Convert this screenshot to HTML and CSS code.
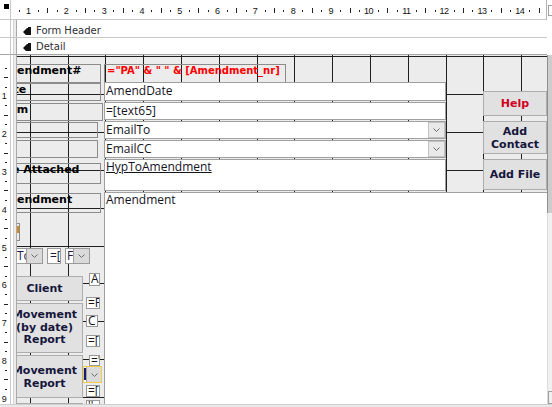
FILE: index.html
```html
<!DOCTYPE html>
<html>
<head>
<meta charset="utf-8">
<title>Form Design</title>
<link rel="stylesheet" href="styles.css">
</head>
<body>
<div class="win">
  <div class="toprow">
    <div class="corner"><span class="sq"></span></div>
    <div class="hr">
      <svg class="hruler" width="535" height="19" viewBox="0 0 535 19">
        <g fill="#222">
          <rect x="8" y="10" width="1" height="2"/><rect x="27" y="10" width="1" height="2"/><rect x="46" y="10" width="1" height="2"/><rect x="65" y="10" width="1" height="2"/><rect x="83" y="10" width="1" height="2"/><rect x="102" y="10" width="1" height="2"/><rect x="121" y="10" width="1" height="2"/><rect x="140" y="10" width="1" height="2"/><rect x="159" y="10" width="1" height="2"/><rect x="178" y="10" width="1" height="2"/><rect x="197" y="10" width="1" height="2"/><rect x="216" y="10" width="1" height="2"/><rect x="235" y="10" width="1" height="2"/><rect x="254" y="10" width="1" height="2"/><rect x="272" y="10" width="1" height="2"/><rect x="291" y="10" width="1" height="2"/><rect x="310" y="10" width="1" height="2"/><rect x="329" y="10" width="1" height="2"/><rect x="348" y="10" width="1" height="2"/><rect x="367" y="10" width="1" height="2"/><rect x="386" y="10" width="1" height="2"/><rect x="405" y="10" width="1" height="2"/><rect x="424" y="10" width="1" height="2"/><rect x="443" y="10" width="1" height="2"/><rect x="461" y="10" width="1" height="2"/><rect x="480" y="10" width="1" height="2"/><rect x="499" y="10" width="1" height="2"/><rect x="518" y="10" width="1" height="2"/>
          <rect x="36" y="8" width="1" height="5"/><rect x="74" y="8" width="1" height="5"/><rect x="112" y="8" width="1" height="5"/><rect x="150" y="8" width="1" height="5"/><rect x="187" y="8" width="1" height="5"/><rect x="225" y="8" width="1" height="5"/><rect x="263" y="8" width="1" height="5"/><rect x="301" y="8" width="1" height="5"/><rect x="339" y="8" width="1" height="5"/><rect x="376" y="8" width="1" height="5"/><rect x="414" y="8" width="1" height="5"/><rect x="452" y="8" width="1" height="5"/><rect x="490" y="8" width="1" height="5"/><rect x="528" y="8" width="1" height="5"/>
        </g>
        <g class="rnum" text-anchor="middle">
          <text x="17.3" y="14">1</text><text x="55.1" y="14">2</text><text x="92.9" y="14">3</text><text x="130.7" y="14">4</text><text x="168.5" y="14">5</text><text x="206.3" y="14">6</text><text x="244.1" y="14">7</text><text x="281.9" y="14">8</text><text x="319.7" y="14">9</text><text x="357.5" y="14">10</text><text x="395.3" y="14">11</text><text x="433.1" y="14">12</text><text x="470.9" y="14">13</text><text x="508.7" y="14">14</text>
        </g>
      </svg>
    </div>
    <div class="trr"><span class="trbtn"></span></div>
  </div>

  <div class="secrow fh">
    <div class="rcell"></div>
    <div class="gut"></div>
    <div class="bar"><svg class="secicon" width="8" height="8" viewBox="0 0 8 8"><polygon points="0,5 4,1 5,1 5,0 8,0 8,8 3,8" fill="#111"/></svg><span>Form Header</span></div>
    <div class="rblank"></div>
  </div>

  <div class="secrow dt">
    <div class="rcell"></div>
    <div class="gut"></div>
    <div class="bar"><svg class="secicon" width="8" height="8" viewBox="0 0 8 8"><polygon points="0,5 4,1 5,1 5,0 8,0 8,8 3,8" fill="#111"/></svg><span>Detail</span></div>
    <div class="rblank"></div>
  </div>

  <div class="mainrow">
    <div class="vr">
      <svg class="vruler" width="10" height="349" viewBox="0 0 10 349">
        <g fill="#222">
          <rect x="5" y="13" width="2" height="1"/><rect x="5" y="32" width="2" height="1"/><rect x="5" y="50" width="2" height="1"/><rect x="5" y="69" width="2" height="1"/><rect x="5" y="88" width="2" height="1"/><rect x="5" y="107" width="2" height="1"/><rect x="5" y="126" width="2" height="1"/><rect x="5" y="145" width="2" height="1"/><rect x="5" y="164" width="2" height="1"/><rect x="5" y="183" width="2" height="1"/><rect x="5" y="202" width="2" height="1"/><rect x="5" y="221" width="2" height="1"/><rect x="5" y="239" width="2" height="1"/><rect x="5" y="258" width="2" height="1"/><rect x="5" y="277" width="2" height="1"/><rect x="5" y="296" width="2" height="1"/><rect x="5" y="315" width="2" height="1"/><rect x="5" y="334" width="2" height="1"/>
          <rect x="4" y="22" width="4" height="1"/><rect x="4" y="60" width="4" height="1"/><rect x="4" y="98" width="4" height="1"/><rect x="4" y="135" width="4" height="1"/><rect x="4" y="173" width="4" height="1"/><rect x="4" y="211" width="4" height="1"/><rect x="4" y="249" width="4" height="1"/><rect x="4" y="287" width="4" height="1"/><rect x="4" y="324" width="4" height="1"/>
        </g>
        <g class="rnum" text-anchor="middle">
          <text x="4" y="44.3">1</text><text x="4" y="82.1">2</text><text x="4" y="119.9">3</text><text x="4" y="157.7">4</text><text x="4" y="195.5">5</text><text x="4" y="233.3">6</text><text x="4" y="271.1">7</text><text x="4" y="308.9">8</text><text x="4" y="346.7">9</text>
        </g>
      </svg>
    </div>
    <div class="gut"></div>
    <div class="canvas">
      <svg class="grid" width="530" height="349" viewBox="0 0 530 349">
        <g fill="#1f1f1f">
          <rect x="13" y="0" width="1" height="349"/><rect x="51" y="0" width="1" height="349"/><rect x="88" y="0" width="1" height="349"/><rect x="126" y="0" width="1" height="349"/><rect x="164" y="0" width="1" height="349"/><rect x="202" y="0" width="1" height="349"/><rect x="240" y="0" width="1" height="349"/><rect x="277" y="0" width="1" height="349"/><rect x="315" y="0" width="1" height="349"/><rect x="353" y="0" width="1" height="349"/><rect x="391" y="0" width="1" height="349"/><rect x="429" y="0" width="1" height="349"/><rect x="466" y="0" width="1" height="349"/><rect x="504" y="0" width="1" height="349"/>
          <rect x="0" y="1" width="530" height="1"/><rect x="0" y="39" width="530" height="1"/><rect x="0" y="77" width="530" height="1"/><rect x="0" y="115" width="530" height="1"/><rect x="0" y="153" width="530" height="1"/><rect x="0" y="191" width="530" height="1"/><rect x="0" y="228" width="530" height="1"/><rect x="0" y="266" width="530" height="1"/><rect x="0" y="304" width="530" height="1"/><rect x="0" y="342" width="530" height="1"/>
        </g>
      </svg>

      <div class="lbl l-num">Amendment#</div>
      <div class="lbl l-date">Date</div>
      <div class="lbl l-from">From</div>
      <div class="lbl l-to">To</div>
      <div class="lbl l-cc">CC</div>
      <div class="lbl l-file">File Attached</div>
      <div class="lbl l-amd">Amendment</div>

      <div class="expr">="PA" &amp; " " &amp; [Amendment_nr]</div>

      <div class="tb t-date">AmendDate</div>
      <div class="tb t-t65">=[text65]</div>
      <div class="tb t-to">EmailTo<span class="dd"><svg width="7" height="4" viewBox="0 0 7 4"><polyline points="0.5,0.5 3.5,3.5 6.5,0.5" fill="none" stroke="#6a6a6a" stroke-width="1"/></svg></span></div>
      <div class="tb t-cc">EmailCC<span class="dd"><svg width="7" height="4" viewBox="0 0 7 4"><polyline points="0.5,0.5 3.5,3.5 6.5,0.5" fill="none" stroke="#6a6a6a" stroke-width="1"/></svg></span></div>
      <div class="tb t-hyp"><span class="link">HypToAmendment</span></div>
      <div class="tb t-amd">Amendment</div>

      <div class="btn b-help">Help</div>
      <div class="btn b-contact">Add<br>Contact</div>
      <div class="btn b-file">Add File</div>

      <div class="obox"><span class="omark"></span></div>

      <div class="cmb c-a"><span class="ctext">To</span><span class="cdd"><svg width="7" height="4" viewBox="0 0 7 4"><polyline points="0.5,0.5 3.5,3.5 6.5,0.5" fill="none" stroke="#6a6a6a" stroke-width="1"/></svg></span></div>
      <div class="cmb c-b"><span class="ctext">=[</span></div>
      <div class="cmb c-c"><span class="ctext">F</span><span class="cdd"><svg width="7" height="4" viewBox="0 0 7 4"><polyline points="0.5,0.5 3.5,3.5 6.5,0.5" fill="none" stroke="#6a6a6a" stroke-width="1"/></svg></span></div>

      <div class="btn b-client">Client</div>
      <div class="btn b-mvd">Movement<br>(by date)<br>Report</div>
      <div class="btn b-mv">Movement<br>Report</div>
      <div class="btn b-next"></div>

      <div class="sm s-a">A</div>
      <div class="sm s-f">=F</div>
      <div class="sm s-c">C</div>
      <div class="sm s-l1">=[l</div>
      <div class="sm s-q">='</div>
      <div class="ydd"><span class="ynav"></span><span class="cdd"><svg width="7" height="4" viewBox="0 0 7 4"><polyline points="0.5,0.5 3.5,3.5 6.5,0.5" fill="none" stroke="#6a6a6a" stroke-width="1"/></svg></span></div>
      <div class="sm s-l2">=[l</div>
      <div class="sm s-r">''</div>
    </div>
    <div class="vscroll">
      <div class="thumb"></div>
      <div class="track"><div class="dn"></div></div>
    </div>
  </div>
  <div class="hscroll"></div>
</div>
</body>
</html>
```

FILE: styles.css
```css
html, body {
  margin: 0;
  padding: 0;
  background: #fff;
}
body {
  width: 552px;
  height: 407px;
  overflow: hidden;
}
.win {
  width: 552px;
  height: 407px;
  overflow: hidden;
  display: flex;
  flex-direction: column;
}
svg { display: block; }
.rnum {
  font-family: "Liberation Sans", Arial, sans-serif;
  font-size: 9px;
  letter-spacing: -0.5px;
  fill: #111;
}

/* top ruler row */
.toprow {
  display: flex;
  flex: none;
  height: 20px;
  align-items: flex-start;
}
.corner {
  width: 10px;
  height: 19px;
  border-right: 1px solid #c8c8c8;
  border-bottom: 1px solid #c8c8c8;
}
.sq {
  display: block;
  width: 5px;
  height: 5px;
  margin: 4px 0 0 4px;
  background: #000;
}
.hr {
  width: 535px;
  height: 19px;
  border-right: 1px solid #b4b4b4;
  border-bottom: 1px solid #c8c8c8;
}
.trr { width: 5px; }
.trbtn {
  display: block;
  margin: 5px 0 0 1px;
  height: 9px;
  border: 1px solid #a0a0a0;
  border-right: 0;
}

/* section bars */
.secrow {
  display: flex;
  flex: none;
}
.rcell {
  width: 10px;
  border-right: 1px solid #c8c8c8;
}
.gut {
  width: 6px;
  background: linear-gradient(to right, #fff 0 2px, #d6d6d6 2px 3px, #ebebeb 3px 5px, #a9a9a9 5px 6px);
}
.bar {
  width: 530px;
  box-sizing: border-box;
  padding-left: 6px;
  display: flex;
  align-items: flex-start;
  font-family: "DejaVu Sans", sans-serif;
  font-size: 10px;
  line-height: 12px;
  color: #2e2e33;
}
.secicon {
  margin: 2px 5px 0 0;
}
.rblank { width: 5px; }
.fh .rcell, .fh .gut { height: 17px; border-bottom: 1px solid #c8c8c8; }
.fh .bar { height: 17px; padding-top: 5px; border-bottom: 1px solid #c8c8c8; }
.dt .rcell, .dt .gut { height: 16px; border-bottom: 1px solid #a4a4a4; }
.dt .bar { height: 16px; padding-top: 3px; border-bottom: 1px solid #a4a4a4; }
.bar { box-sizing: content-box; width: 524px; }
.fh .bar { height: 12px; }
.dt .bar { height: 13px; }

/* main row */
.mainrow {
  display: flex;
  flex: none;
  height: 349px;
}
.vr {
  width: 10px;
  border-right: 1px solid #c8c8c8;
}
.canvas {
  position: relative;
  width: 530px;
  height: 349px;
  background: #ececec;
  overflow: hidden;
}
.grid {
  position: absolute;
  left: 0;
  top: 0;
}
.vscroll {
  width: 5px;
  display: flex;
  flex-direction: column;
}
.thumb {
  height: 158px;
  border-left: 1px solid #8f8f8f;
  background: #cdcdcd;
}
.track {
  flex: 1;
  display: flex;
  flex-direction: column;
  justify-content: flex-end;
  border-left: 1px solid #dcdcdc;
  background: #f0f0f0;
}
.dn {
  height: 11px;
  margin-left: 0;
  border: 1px solid #a0a0a0;
  border-right: 0;
}
.hscroll {
  flex: none;
  height: 3px;
  border-top: 1px solid #cfcfcf;
  background: #e8e8e8;
}

/* labels */
.lbl {
  position: absolute;
  left: -24px;
  box-sizing: border-box;
  border: 1px solid #8c8c8c;
  padding-left: 3px;
  font-family: "DejaVu Sans", sans-serif;
  font-weight: bold;
  font-size: 11px;
  line-height: 12px;
  color: #000;
  white-space: nowrap;
  overflow: hidden;
}
.l-num  { top: 9px;   height: 19px; width: 108px; }
.l-date { top: 28px;  height: 18px; width: 108px; }
.l-from { top: 48px;  height: 18px; width: 110px; }
.l-to   { top: 67px;  height: 16px; width: 105px; }
.l-cc   { top: 85px;  height: 18px; width: 105px; }
.l-file { top: 108px; height: 21px; width: 108px; }
.l-amd  { top: 138px; height: 20px; width: 108px; }

/* expression box */
.expr {
  position: absolute;
  left: 87px;
  top: 9px;
  width: 182px;
  height: 19px;
  box-sizing: border-box;
  border: 1px solid #8c8c8c;
  padding-left: 2px;
  font-family: "DejaVu Sans", sans-serif;
  font-weight: bold;
  font-size: 10px;
  line-height: 12px;
  color: #ff0000;
  white-space: nowrap;
  overflow: hidden;
}

/* text boxes */
.tb {
  position: absolute;
  left: 87px;
  width: 342px;
  box-sizing: border-box;
  background: #fff;
  border: 1px solid #a0a0a0;
  padding-left: 1px;
  font-family: "Open Sans", sans-serif;
  font-size: 12px;
  line-height: 15px;
  color: #14141e;
  white-space: nowrap;
  overflow: hidden;
}
.t-date { top: 27px;  height: 19px; }
.t-t65  { top: 47px;  height: 18px; }
.t-to   { top: 66px;  height: 18px; }
.t-cc   { top: 85px;  height: 18px; }
.t-hyp  { top: 104px; height: 32px; line-height: 14px; }
.t-amd  { top: 137px; height: 260px; width: 460px; line-height: 14px; }
.link { text-decoration: underline; }
.dd {
  position: absolute;
  right: 0;
  top: 0;
  width: 17px;
  height: 16px;
  box-sizing: border-box;
  background: #e9e9e9;
  border: 1px solid #c2c2c2;
  display: flex;
  align-items: center;
  justify-content: center;
}

/* buttons */
.btn {
  position: absolute;
  box-sizing: border-box;
  background: #e1e1e1;
  border: 1px solid #adadad;
  display: flex;
  align-items: center;
  justify-content: center;
  text-align: center;
  font-family: "DejaVu Sans", sans-serif;
  font-weight: bold;
  font-size: 11px;
  line-height: 13px;
  color: #16163c;
  white-space: nowrap;
}
.b-help    { left: 466px; top: 36px;  width: 64px; height: 25px; color: #d0001e; }
.b-contact { left: 466px; top: 66px;  width: 64px; height: 33px; }
.b-file    { left: 466px; top: 104px; width: 64px; height: 31px; }
.b-client  { left: -11px; top: 221px; width: 77px; height: 25px; }
.b-mvd     { left: -11px; top: 248px; width: 77px; height: 50px; line-height: 12.5px; }
.b-mv      { left: -11px; top: 300px; width: 77px; height: 43px; }
.b-next    { left: -11px; top: 348px; width: 77px; height: 40px; }

/* small orange control */
.obox {
  position: absolute;
  left: -20px;
  top: 168px;
  width: 23px;
  height: 18px;
  box-sizing: border-box;
  border: 1px solid #8c8c8c;
}
.omark {
  display: block;
  width: 2px;
  height: 7px;
  margin: 2px 0 0 19px;
  background: #d8891c;
}

/* combos */
.cmb {
  position: absolute;
  top: 193px;
  height: 16px;
  box-sizing: border-box;
  border: 1px solid #9a9a9a;
  background: #fff;
  display: flex;
  overflow: hidden;
  font-family: "Open Sans", sans-serif;
  font-size: 12px;
  line-height: 14px;
  color: #1c1a44;
}
.ctext {
  flex: 1;
  overflow: hidden;
  white-space: nowrap;
  padding-left: 1px;
}
.cdd {
  flex: none;
  width: 16px;
  box-sizing: border-box;
  background: #dadada;
  border-left: 1px solid #a0a0a0;
  display: flex;
  align-items: center;
  justify-content: center;
}
.c-a { left: -30px; width: 56px; }
.c-a .ctext { padding-left: 29px; }
.c-b { left: 30px; width: 14px; }
.c-b .ctext { padding-left: 2px; }
.c-c { left: 48px; width: 25px; }

/* tiny text boxes */
.sm {
  position: absolute;
  box-sizing: border-box;
  background: #fff;
  border: 1px solid #999;
  padding-left: 1px;
  font-family: "Open Sans", sans-serif;
  font-size: 12px;
  line-height: 10px;
  color: #14141e;
  white-space: nowrap;
  overflow: hidden;
}
.s-a  { left: 72px; top: 218px; width: 11px; height: 13px; }
.s-f  { left: 69px; top: 242px; width: 14px; height: 12px; }
.s-c  { left: 69px; top: 260px; width: 12px; height: 12px; }
.s-l1 { left: 69px; top: 280px; width: 14px; height: 12px; }
.s-q  { left: 72px; top: 300px; width: 11px; height: 11px; }
.s-l2 { left: 69px; top: 330px; width: 14px; height: 12px; }
.s-r  { left: 69px; top: 345px; width: 14px; height: 12px; }

.ydd {
  position: absolute;
  left: 66px;
  top: 311px;
  width: 19px;
  height: 17px;
  box-sizing: border-box;
  border: 1px solid #f0cc48;
  background: #fff;
  display: flex;
}
.ynav {
  flex: none;
  width: 2px;
  margin: 1px 0 2px 0;
  background: #1b1b6b;
}
.ydd .cdd { flex: 1; }
```
